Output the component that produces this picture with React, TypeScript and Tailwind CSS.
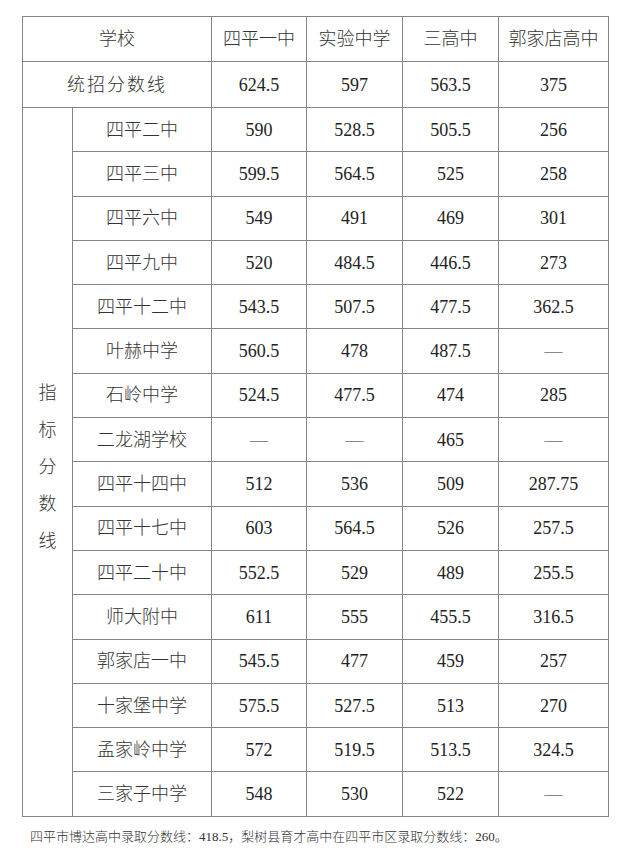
const schools = ['四平一中', '实验中学', '三高中', '郭家店高中']

const rows: [string, string, string, string, string][] = [
  ['四平二中', '590', '528.5', '505.5', '256'],
  ['四平三中', '599.5', '564.5', '525', '258'],
  ['四平六中', '549', '491', '469', '301'],
  ['四平九中', '520', '484.5', '446.5', '273'],
  ['四平十二中', '543.5', '507.5', '477.5', '362.5'],
  ['叶赫中学', '560.5', '478', '487.5', '—'],
  ['石岭中学', '524.5', '477.5', '474', '285'],
  ['二龙湖学校', '—', '—', '465', '—'],
  ['四平十四中', '512', '536', '509', '287.75'],
  ['四平十七中', '603', '564.5', '526', '257.5'],
  ['四平二十中', '552.5', '529', '489', '255.5'],
  ['师大附中', '611', '555', '455.5', '316.5'],
  ['郭家店一中', '545.5', '477', '459', '257'],
  ['十家堡中学', '575.5', '527.5', '513', '270'],
  ['孟家岭中学', '572', '519.5', '513.5', '324.5'],
  ['三家子中学', '548', '530', '522', '—'],
]

const cell = 'border border-[#858585] text-center align-middle p-0'
// Chinese labels are thin in the source, digits stay regular
const cjk = 'font-light text-[#333]'

function Value({ v }: { v: string }) {
  if (v === '—') return <span className="text-[#888] font-light">—</span>
  return <span>{v}</span>
}

export default function App() {
  return (
    <div
      className="w-[640px] h-[861px] bg-white text-[#222] pt-[16px] pl-[22px]"
      style={{ fontFamily: '"Liberation Serif", "Noto Sans CJK SC", serif' }}
    >
      <table className="border-collapse table-fixed w-[586px] text-[18px] leading-none">
        <colgroup>
          <col className="w-[50px]" />
          <col className="w-[139px]" />
          <col className="w-[95px]" />
          <col className="w-[96px]" />
          <col className="w-[96px]" />
          <col className="w-[110px]" />
        </colgroup>
        <tbody>
          <tr className="h-[45px]">
            <td colSpan={2} className={cell}><span className={cjk}>学校</span></td>
            {schools.map((s) => (
              <td key={s} className={cell}><span className={cjk}>{s}</span></td>
            ))}
          </tr>
          <tr className="h-[46px]">
            <td colSpan={2} className={cell}>
              <span className={`${cjk} tracking-[2px]`}>统招分数线</span>
            </td>
            <td className={cell}>624.5</td>
            <td className={cell}>597</td>
            <td className={cell}>563.5</td>
            <td className={cell}>375</td>
          </tr>
          {rows.map((r, i) => (
            <tr key={r[0]} className="h-[44.3px]">
              {i === 0 && (
                <td rowSpan={rows.length} className={cell}>
                  <div className={`flex flex-col items-center gap-[19px] pt-[10px] ${cjk}`}>
                    {'指标分数线'.split('').map((c) => (
                      <span key={c}>{c}</span>
                    ))}
                  </div>
                </td>
              )}
              <td className={cell}><span className={cjk}>{r[0]}</span></td>
              <td className={cell}><Value v={r[1]} /></td>
              <td className={cell}><Value v={r[2]} /></td>
              <td className={cell}><Value v={r[3]} /></td>
              <td className={cell}><Value v={r[4]} /></td>
            </tr>
          ))}
        </tbody>
      </table>
      <p className="mt-[13px] ml-[8px] text-[13px] leading-none font-light text-[#333]">
        四平市博达高中录取分数线：418.5，梨树县育才高中在四平市区录取分数线：260。
      </p>
    </div>
  )
}
